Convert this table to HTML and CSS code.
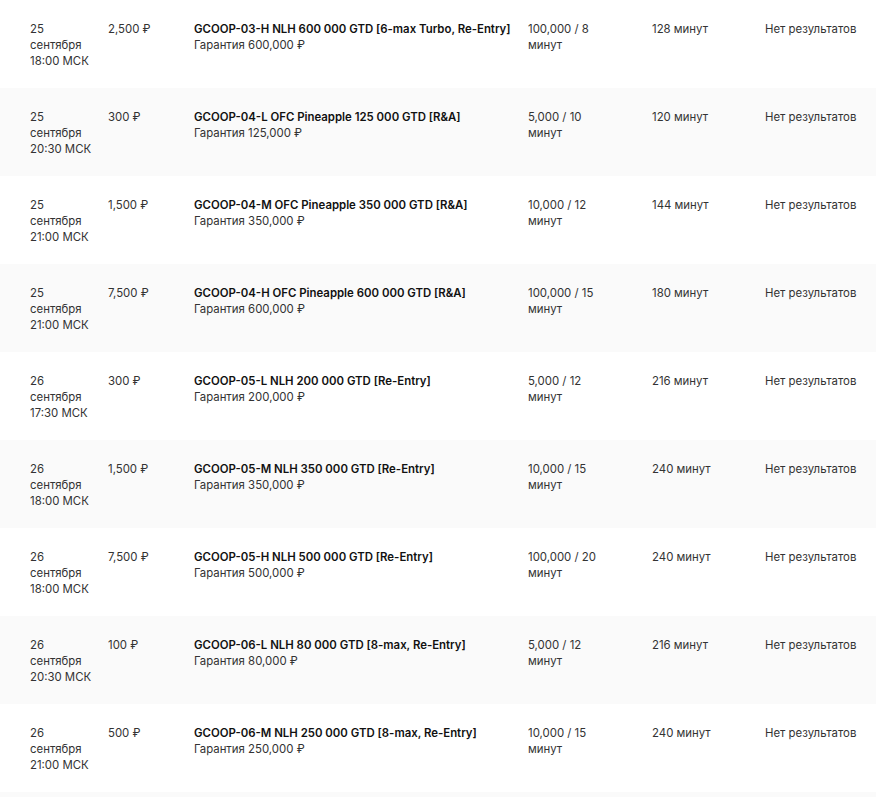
FILE: index.html
```html
<!DOCTYPE html>
<html lang="ru">
<head>
<meta charset="utf-8">
<link rel="stylesheet" href="styles.css">
</head>
<body>
<div class="table">
  <div class="row">
    <div class="date"><span>25</span><span>сентября</span><span>18:00 МСК</span></div>
    <div class="price">2,500 ₽</div>
    <div class="name"><b>GCOOP-03-H NLH 600 000 GTD [6-max Turbo, Re-Entry]</b><span>Гарантия 600,000 ₽</span></div>
    <div class="stack"><span>100,000 / 8</span><span>минут</span></div>
    <div class="dur">128 минут</div>
    <div class="res">Нет результатов</div>
  </div>
  <div class="row">
    <div class="date"><span>25</span><span>сентября</span><span>20:30 МСК</span></div>
    <div class="price">300 ₽</div>
    <div class="name"><b>GCOOP-04-L OFC Pineapple 125 000 GTD [R&amp;A]</b><span>Гарантия 125,000 ₽</span></div>
    <div class="stack"><span>5,000 / 10</span><span>минут</span></div>
    <div class="dur">120 минут</div>
    <div class="res">Нет результатов</div>
  </div>
  <div class="row">
    <div class="date"><span>25</span><span>сентября</span><span>21:00 МСК</span></div>
    <div class="price">1,500 ₽</div>
    <div class="name"><b>GCOOP-04-M OFC Pineapple 350 000 GTD [R&amp;A]</b><span>Гарантия 350,000 ₽</span></div>
    <div class="stack"><span>10,000 / 12</span><span>минут</span></div>
    <div class="dur">144 минут</div>
    <div class="res">Нет результатов</div>
  </div>
  <div class="row">
    <div class="date"><span>25</span><span>сентября</span><span>21:00 МСК</span></div>
    <div class="price">7,500 ₽</div>
    <div class="name"><b>GCOOP-04-H OFC Pineapple 600 000 GTD [R&amp;A]</b><span>Гарантия 600,000 ₽</span></div>
    <div class="stack"><span>100,000 / 15</span><span>минут</span></div>
    <div class="dur">180 минут</div>
    <div class="res">Нет результатов</div>
  </div>
  <div class="row">
    <div class="date"><span>26</span><span>сентября</span><span>17:30 МСК</span></div>
    <div class="price">300 ₽</div>
    <div class="name"><b>GCOOP-05-L NLH 200 000 GTD [Re-Entry]</b><span>Гарантия 200,000 ₽</span></div>
    <div class="stack"><span>5,000 / 12</span><span>минут</span></div>
    <div class="dur">216 минут</div>
    <div class="res">Нет результатов</div>
  </div>
  <div class="row">
    <div class="date"><span>26</span><span>сентября</span><span>18:00 МСК</span></div>
    <div class="price">1,500 ₽</div>
    <div class="name"><b>GCOOP-05-M NLH 350 000 GTD [Re-Entry]</b><span>Гарантия 350,000 ₽</span></div>
    <div class="stack"><span>10,000 / 15</span><span>минут</span></div>
    <div class="dur">240 минут</div>
    <div class="res">Нет результатов</div>
  </div>
  <div class="row">
    <div class="date"><span>26</span><span>сентября</span><span>18:00 МСК</span></div>
    <div class="price">7,500 ₽</div>
    <div class="name"><b>GCOOP-05-H NLH 500 000 GTD [Re-Entry]</b><span>Гарантия 500,000 ₽</span></div>
    <div class="stack"><span>100,000 / 20</span><span>минут</span></div>
    <div class="dur">240 минут</div>
    <div class="res">Нет результатов</div>
  </div>
  <div class="row">
    <div class="date"><span>26</span><span>сентября</span><span>20:30 МСК</span></div>
    <div class="price">100 ₽</div>
    <div class="name"><b>GCOOP-06-L NLH 80 000 GTD [8-max, Re-Entry]</b><span>Гарантия 80,000 ₽</span></div>
    <div class="stack"><span>5,000 / 12</span><span>минут</span></div>
    <div class="dur">216 минут</div>
    <div class="res">Нет результатов</div>
  </div>
  <div class="row">
    <div class="date"><span>26</span><span>сентября</span><span>21:00 МСК</span></div>
    <div class="price">500 ₽</div>
    <div class="name"><b>GCOOP-06-M NLH 250 000 GTD [8-max, Re-Entry]</b><span>Гарантия 250,000 ₽</span></div>
    <div class="stack"><span>10,000 / 15</span><span>минут</span></div>
    <div class="dur">240 минут</div>
    <div class="res">Нет результатов</div>
  </div>
  <div class="row tail"></div>
</div>
</body>
</html>
```
FILE: styles.css
```css
html, body {
  margin: 0;
  padding: 0;
  background: #fff;
  overflow: hidden;
}
body {
  font-family: Inter, "Noto Sans", sans-serif;
  font-size: 11.4px;
  line-height: 16px;
  color: #333;
}
.table {
  display: flex;
  flex-direction: column;
}
.row {
  display: grid;
  grid-template-columns: 78px 86px 334px 124px 113px 1fr;
  height: 88px;
  box-sizing: border-box;
  padding: 21px 0 19px 30px;
  background: #fff;
}
.row:nth-child(even) {
  background: #fafafa;
}
.row.tail {
  height: 5px;
  padding: 0;
}
.date, .name, .stack {
  display: flex;
  flex-direction: column;
}
.name b {
  font-weight: 600;
  color: #111;
}
.res {
  white-space: nowrap;
}
```
